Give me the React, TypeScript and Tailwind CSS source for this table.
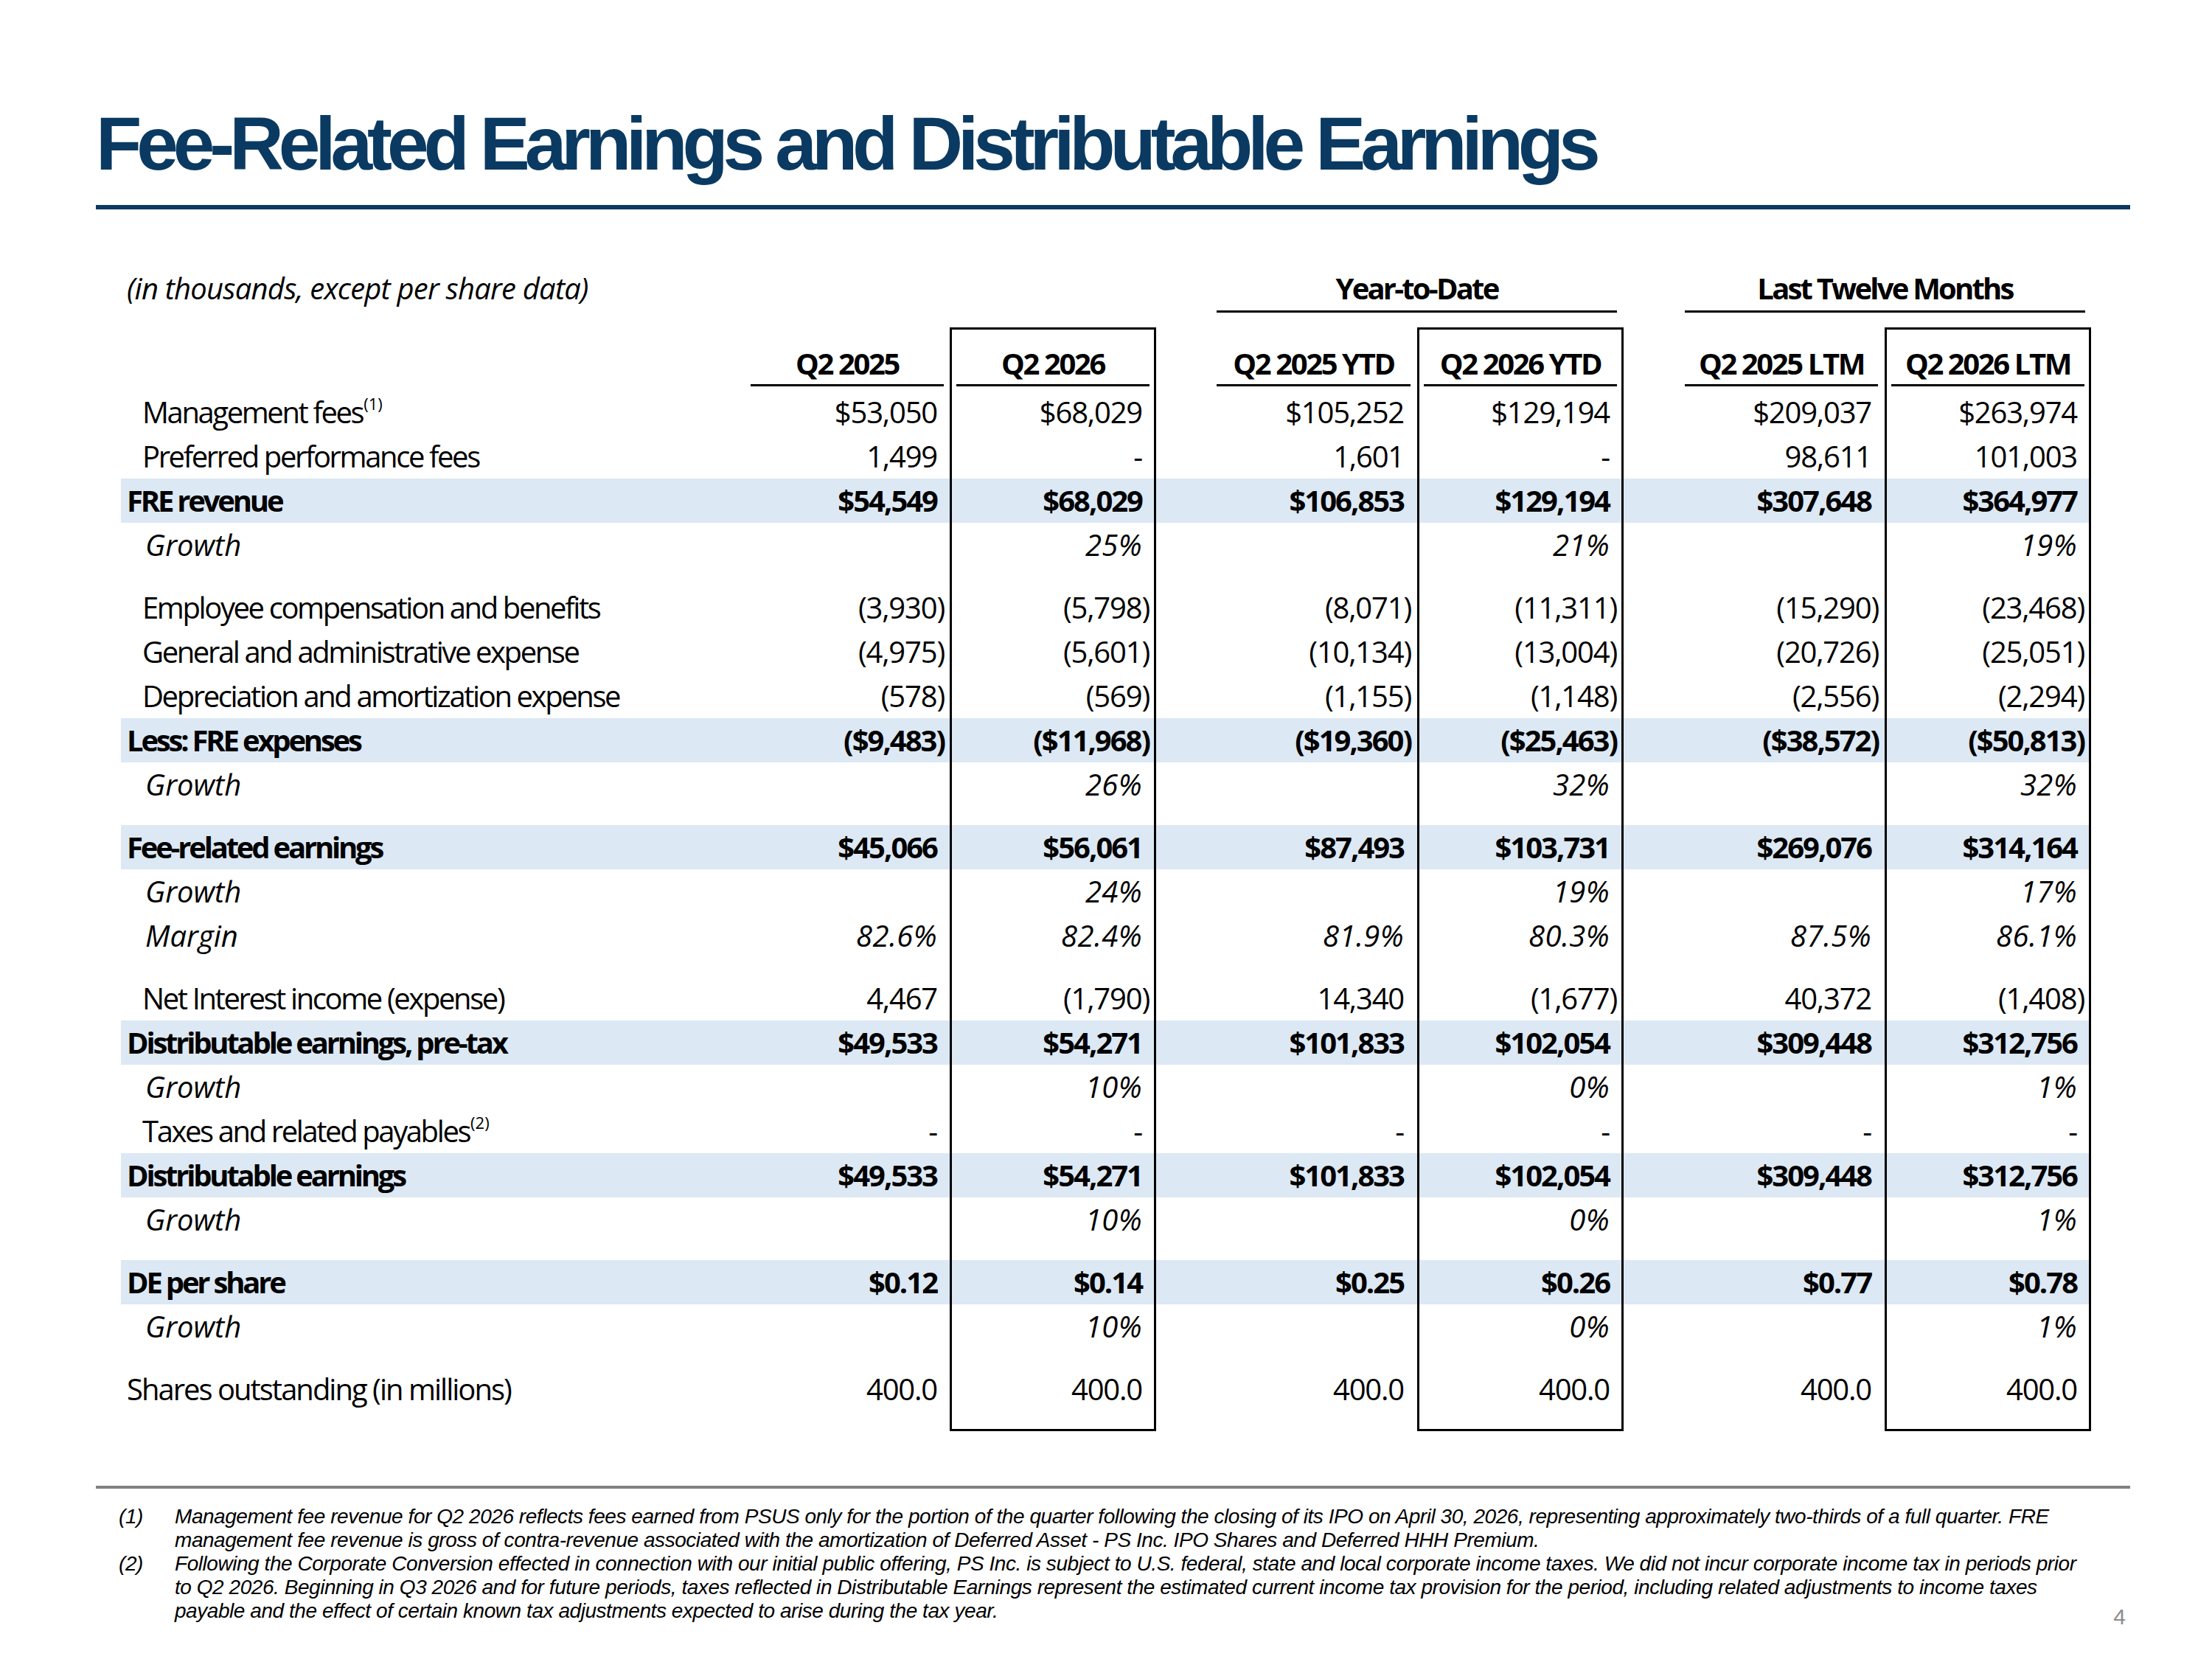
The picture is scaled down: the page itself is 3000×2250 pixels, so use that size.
import { Fragment } from "react"

const GRID = "grid w-[2672px] grid-cols-[854px_262px_8px_280px_82px_263px_9px_280px_83px_262px_9px_280px]"

type Kind = "item" | "total" | "pct" | "plain"
type Line = { label: string; note?: string; kind: Kind; values: string[] }
type Row = Line | "spacer"

const rows: Row[] = [
  { label: "Management fees", note: "(1)", kind: "item", values: ["$53,050", "$68,029", "$105,252", "$129,194", "$209,037", "$263,974"] },
  { label: "Preferred performance fees", kind: "item", values: ["1,499", "-", "1,601", "-", "98,611", "101,003"] },
  { label: "FRE revenue", kind: "total", values: ["$54,549", "$68,029", "$106,853", "$129,194", "$307,648", "$364,977"] },
  { label: "Growth", kind: "pct", values: ["", "25%", "", "21%", "", "19%"] },
  "spacer",
  { label: "Employee compensation and benefits", kind: "item", values: ["(3,930)", "(5,798)", "(8,071)", "(11,311)", "(15,290)", "(23,468)"] },
  { label: "General and administrative expense", kind: "item", values: ["(4,975)", "(5,601)", "(10,134)", "(13,004)", "(20,726)", "(25,051)"] },
  { label: "Depreciation and amortization expense", kind: "item", values: ["(578)", "(569)", "(1,155)", "(1,148)", "(2,556)", "(2,294)"] },
  { label: "Less: FRE expenses", kind: "total", values: ["($9,483)", "($11,968)", "($19,360)", "($25,463)", "($38,572)", "($50,813)"] },
  { label: "Growth", kind: "pct", values: ["", "26%", "", "32%", "", "32%"] },
  "spacer",
  { label: "Fee-related earnings", kind: "total", values: ["$45,066", "$56,061", "$87,493", "$103,731", "$269,076", "$314,164"] },
  { label: "Growth", kind: "pct", values: ["", "24%", "", "19%", "", "17%"] },
  { label: "Margin", kind: "pct", values: ["82.6%", "82.4%", "81.9%", "80.3%", "87.5%", "86.1%"] },
  "spacer",
  { label: "Net Interest income (expense)", kind: "item", values: ["4,467", "(1,790)", "14,340", "(1,677)", "40,372", "(1,408)"] },
  { label: "Distributable earnings, pre-tax", kind: "total", values: ["$49,533", "$54,271", "$101,833", "$102,054", "$309,448", "$312,756"] },
  { label: "Growth", kind: "pct", values: ["", "10%", "", "0%", "", "1%"] },
  { label: "Taxes and related payables", note: "(2)", kind: "item", values: ["-", "-", "-", "-", "-", "-"] },
  { label: "Distributable earnings", kind: "total", values: ["$49,533", "$54,271", "$101,833", "$102,054", "$309,448", "$312,756"] },
  { label: "Growth", kind: "pct", values: ["", "10%", "", "0%", "", "1%"] },
  "spacer",
  { label: "DE per share", kind: "total", values: ["$0.12", "$0.14", "$0.25", "$0.26", "$0.77", "$0.78"] },
  { label: "Growth", kind: "pct", values: ["", "10%", "", "0%", "", "1%"] },
  "spacer",
  { label: "Shares outstanding (in millions)", kind: "plain", values: ["400.0", "400.0", "400.0", "400.0", "400.0", "400.0"] },
]

const headers = ["Q2 2025", "Q2 2026", "Q2 2025 YTD", "Q2 2026 YTD", "Q2 2025 LTM", "Q2 2026 LTM"]

const BOX = "border-x-[3px] border-black"

function Value({ v }: { v: string }) {
  if (v.startsWith("(")) {
    return (
      <>
        {v.slice(0, -1)}
        <span className="-mr-[10px]">)</span>
      </>
    )
  }
  return <>{v}</>
}

// six cells with the gap columns between them; odd index = boxed column
function Cells({ render, h }: { render: (i: number) => React.ReactNode; h: string }) {
  return (
    <>
      {[0, 1, 2, 3, 4, 5].map((i) => (
        <Fragment key={i}>
          {i > 0 && <div />}
          <div className={`${h} ${i % 2 === 1 ? BOX : ""}`}>{render(i)}</div>
        </Fragment>
      ))}
    </>
  )
}

function DataRow({ row }: { row: Line }) {
  const band = row.kind === "total"
  const labelCls =
    row.kind === "total"
      ? "pl-[8px] font-bold tracking-[-0.08em]"
      : row.kind === "pct"
        ? "pl-[33px] italic tracking-normal"
        : row.kind === "plain"
          ? "pl-[8px] tracking-[-0.05em]"
          : "pl-[29px] tracking-[-0.06em]"
  const valueCls = row.kind === "total" ? "font-bold tracking-[-0.05em]" : row.kind === "pct" ? "italic tracking-[0.01em]" : "tracking-[-0.03em]"

  return (
    <div className={`${GRID} h-[60px] ${band ? "bg-[#dce8f4]" : ""}`}>
      <div className={`leading-[60px] whitespace-nowrap ${labelCls}`}>
        {row.label}
        {row.note && <sup className="text-[22px] -top-[18px] ml-[1px] tracking-normal font-normal">{row.note}</sup>}
      </div>
      <Cells
        h="h-[60px]"
        render={(i) => (
          <div className={`leading-[60px] text-right whitespace-nowrap ${i % 2 === 1 ? "pr-[16px]" : "pr-[9px]"} ${valueCls}`}>
            <Value v={row.values[i]} />
          </div>
        )}
      />
    </div>
  )
}

export default function App() {
  return (
    <div className="w-[3000px] h-[2250px] bg-white pl-[130px] pr-[111px] pt-[144px] text-black overflow-hidden">
      <h1 className="font-['Liberation_Sans',Arial,sans-serif] font-bold text-[102px] leading-none tracking-[-0.07em] text-[#0a3a62] whitespace-nowrap">
        Fee-Related Earnings and Distributable Earnings
      </h1>
      <div className="mt-[32px] h-[6px] bg-[#0a3a62]" />

      {/* table */}
      <div className="ml-[34px] mt-[77px] font-['Open_Sans',sans-serif] text-[40px]">
        <div className={GRID}>
          <div className="col-span-5 pl-[8px] italic leading-[60px] tracking-[-0.02em] whitespace-nowrap">
            (in thousands, except per share data)
          </div>
          <div className="col-span-3 mr-[9px] h-[63px] border-b-[3px] border-black text-center font-bold leading-[60px] tracking-[-0.07em]">
            Year-to-Date
          </div>
          <div />
          <div className="col-span-3 mr-[8px] h-[63px] border-b-[3px] border-black text-center font-bold leading-[60px] tracking-[-0.07em]">
            Last Twelve Months
          </div>
        </div>

        <div className={`${GRID} mt-[20px]`}>
          <div />
          <Cells
            h="h-[85px]"
            render={(i) => (
              <div className={`h-full flex flex-col justify-end pb-[5px] ${i % 2 === 1 ? "px-[6px] border-t-[3px] border-black" : ""}`}>
                <div className="mb-[4px] text-center font-bold leading-[48px] tracking-[-0.06em] whitespace-nowrap">{headers[i]}</div>
                <div className="h-[3px] bg-black" />
              </div>
            )}
          />
        </div>

        {rows.map((row, idx) =>
          row === "spacer" ? (
            <div key={idx} className={GRID}>
              <div />
              <Cells h="h-[25px]" render={() => null} />
            </div>
          ) : (
            <DataRow key={idx} row={row} />
          ),
        )}

        <div className={GRID}>
          <div />
          <Cells h="h-[27px]" render={(i) => (i % 2 === 1 ? <div className="h-full border-b-[3px] border-black" /> : null)} />
        </div>
      </div>

      {/* footnotes */}
      <div className="mt-[74px] h-[4px] bg-[#808080]" />
      <div className="mt-[22px] flex items-end justify-between font-['Liberation_Sans',Arial,sans-serif] text-[28px] leading-[32px]">
        <div className="pl-[31px] grid grid-cols-[76px_1fr] italic whitespace-nowrap tracking-[-0.016em]">
          <div>(1)</div>
          <div>
            <div>
              Management fee revenue for Q2 2026 reflects fees earned from PSUS only for the portion of the quarter following the closing of its IPO on April 30, 2026, representing approximately two-thirds of a full quarter. FRE
            </div>
            <div>management fee revenue is gross of contra-revenue associated with the amortization of Deferred Asset - PS Inc. IPO Shares and Deferred HHH Premium.</div>
          </div>
          <div>(2)</div>
          <div>
            <div>
              Following the Corporate Conversion effected in connection with our initial public offering, PS Inc. is subject to U.S. federal, state and local corporate income taxes. We did not incur corporate income tax in periods prior
            </div>
            <div>
              to Q2 2026. Beginning in Q3 2026 and for future periods, taxes reflected in Distributable Earnings represent the estimated current income tax provision for the period, including related adjustments to income taxes
            </div>
            <div>payable and the effect of certain known tax adjustments expected to arise during the tax year.</div>
          </div>
        </div>
        <div className="-mb-[8px] pr-[6px] text-[30px] text-[#8c8c8c]">4</div>
      </div>
    </div>
  )
}
